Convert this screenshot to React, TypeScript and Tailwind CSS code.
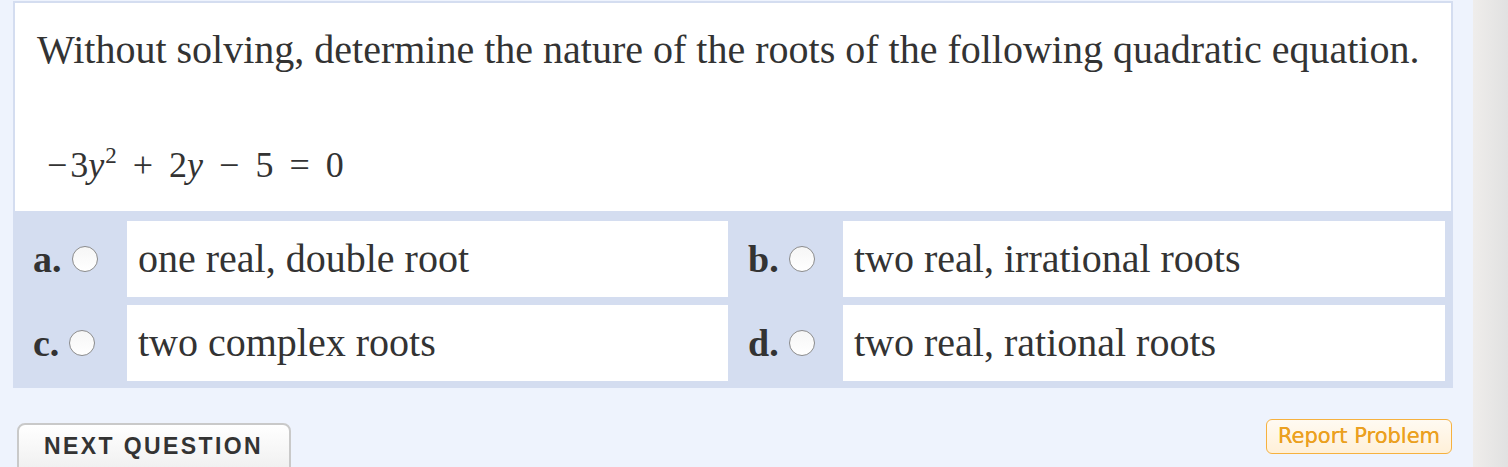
import React from "react";

const serif = { fontFamily: '"Liberation Serif", "Times New Roman", serif' };

function Radio() {
  return (
    <span className="inline-block w-[26px] h-[26px] rounded-full border border-[#8c8c8c] bg-gradient-to-b from-[#f6f6f6] to-white shrink-0" />
  );
}

function Label({ l }: { l: string }) {
  return (
    <div className="flex items-center pl-[20px] h-full">
      <span className="font-bold text-[38px] leading-none text-[#333]" style={serif}>
        {l}
      </span>
      <span className="ml-[10px] flex items-center">
        <Radio />
      </span>
    </div>
  );
}

function Answer({ t }: { t: string }) {
  return (
    <div className="bg-white h-full flex items-center pl-[11px]">
      <span className="text-[40px] leading-none text-[#333]" style={serif}>
        {t}
      </span>
    </div>
  );
}

export default function App() {
  return (
    <div className="flex w-[1508px] h-[467px] overflow-hidden">
      <div className="flex-1 bg-[#eef3fd] pl-[13px] pt-px pr-[20px] flex flex-col">
        <div className="shrink-0 w-[1440px] h-[210px] bg-white border-2 border-b-0 border-[#d4ddf0] pl-[22px] pt-[24px] text-[#333]" style={serif}>
          <div className="text-[40px] leading-[45px]">
            Without solving, determine the nature of the roots of the following quadratic equation.
          </div>
          <div className="mt-[73px] text-[36px] leading-[40px] pl-[10px] flex items-baseline">
            <span className="mr-[3px]">−</span>
            <span>3</span>
            <span className="italic">y</span>
            <span className="text-[23px] relative -top-[14px] ml-[1px]">2</span>
            <span className="mx-[16px]">+</span>
            <span>2</span>
            <span className="italic">y</span>
            <span className="mx-[16px]">−</span>
            <span>5</span>
            <span className="mx-[16px]">=</span>
            <span>0</span>
          </div>
        </div>
        <div className="shrink-0 w-[1440px] bg-[#d4ddf0] pt-[10px] pb-[7px] pr-[8px] grid grid-cols-[114px_601px_115px_602px] grid-rows-[76px_76px] gap-y-[8px]">
          <Label l="a." />
          <Answer t="one real, double root" />
          <Label l="b." />
          <Answer t="two real, irrational roots" />
          <Label l="c." />
          <Answer t="two complex roots" />
          <Label l="d." />
          <Answer t="two real, rational roots" />
        </div>
        <div className="shrink-0 w-[1440px] flex justify-between items-start">
          <div className="shrink-0 ml-[4px] mt-[35px] w-[274px] h-[60px] rounded-t-[8px] border-2 border-[#c9c9c9] bg-gradient-to-b from-white to-[#ececec] pl-[25px] pt-[4px]">
            <span
              className="font-bold text-[23px] tracking-[2.4px] text-[#333]"
              style={{ fontFamily: '"Liberation Sans", Arial, sans-serif' }}
            >
              NEXT QUESTION
            </span>
          </div>
          <div
            className="shrink-0 mr-px mt-[31px] h-[35px] w-[186px] rounded-[6px] border-[1.5px] border-[#f6b13f] bg-gradient-to-b from-[#fffaf2] to-[#fff0d8] flex items-center justify-center text-[21px] text-[#eba020] [text-shadow:0_0_0.4px_#eba020]"
            style={{ fontFamily: '"DejaVu Sans", Verdana, sans-serif' }}
          >
            Report Problem
          </div>
        </div>
      </div>
      <div className="w-[35px] h-full bg-gradient-to-r from-[#efedeb] to-[#e1e1e1]" />
    </div>
  );
}
